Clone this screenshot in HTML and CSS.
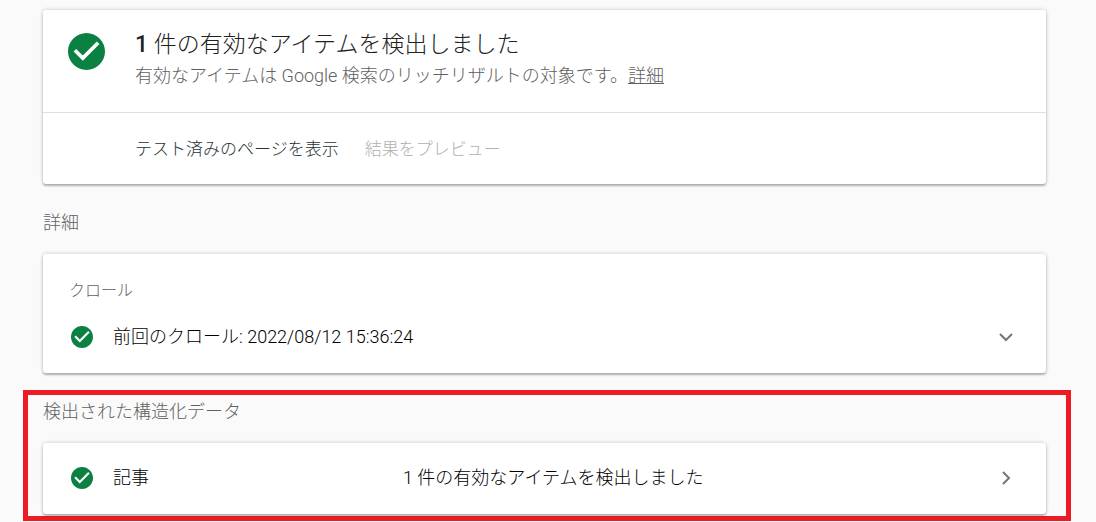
FILE: index.html
```html
<!DOCTYPE html>
<html lang="ja">
<head>
    <meta charset="UTF-8">
    <meta name="viewport" content="width=device-width, initial-scale=1.0">
    <title>リッチリザルト テスト</title>
    <link rel="stylesheet" href="styles.css">
</head>
<body>
<svg class="sprite" aria-hidden="true">
    <symbol id="icon-check" viewBox="2 2 20 20">
        <path d="M12 2C6.48 2 2 6.48 2 12s4.48 10 10 10 10-4.48 10-10S17.52 2 12 2zm-2 15l-5-5 1.41-1.41L10 14.17l7.59-7.59L19 8l-9 9z"/>
    </symbol>
</svg>

<main class="container">
    <section class="card summary">
        <div class="summary-top">
            <svg class="check check-large" aria-hidden="true"><use href="#icon-check"/></svg>
            <div>
                <h1><strong>1</strong> 件の有効なアイテムを検出しました</h1>
                <p>有効なアイテムは Google 検索のリッチリザルトの対象です。<a href="#details">詳細</a></p>
            </div>
        </div>
        <div class="summary-actions">
            <button type="button" class="btn">テスト済みのページを表示</button>
            <button type="button" class="btn" disabled>結果をプレビュー</button>
        </div>
    </section>

    <section class="group" id="details">
        <h2>詳細</h2>
        <div class="card crawl">
            <h3>クロール</h3>
            <button type="button" class="row" aria-expanded="false">
                <svg class="check" aria-hidden="true"><use href="#icon-check"/></svg>
                <span class="row-label">前回のクロール: 2022/08/12 15:36:24</span>
                <svg class="chevron" viewBox="0 0 24 24" aria-hidden="true"><path d="M6 9l6 6 6-6"/></svg>
            </button>
        </div>
    </section>

    <section class="group highlight">
        <h2>検出された構造化データ</h2>
        <div class="card items">
            <button type="button" class="row">
                <svg class="check" aria-hidden="true"><use href="#icon-check"/></svg>
                <span class="row-name">記事</span>
                <span class="row-label">1 件の有効なアイテムを検出しました</span>
                <svg class="chevron" viewBox="0 0 24 24" aria-hidden="true"><path d="M9 6l6 6-6 6"/></svg>
            </button>
        </div>
    </section>
</main>
</body>
</html>
```

FILE: styles.css
```css
* {
    box-sizing: border-box;
}

body {
    margin: 0;
    background: #fafafa;
    color: #212121;
    font-family: Roboto, "Noto Sans CJK JP Light", "Noto Sans CJK JP", sans-serif;
    font-size: 18px;
    font-weight: 300;
    line-height: 24px;
}

h1,
h2,
h3,
p {
    margin: 0;
    font-weight: 300;
}

.sprite {
    display: none;
}

.container {
    padding: 10px 50px 0 43px;
}

.card {
    background: #fff;
    border-radius: 3px;
    box-shadow: 0 2px 2px rgba(0, 0, 0, 0.24), 0 0 4px rgba(0, 0, 0, 0.2);
}

.check {
    flex: none;
    width: 22px;
    height: 22px;
    fill: #0b8043;
}

.check-large {
    width: 37px;
    height: 37px;
}

/* Summary */
.summary-top {
    display: flex;
    align-items: flex-start;
    gap: 30px;
    padding: 23px 25px 22px;
    border-bottom: 1px solid #e0e0e0;
}

.summary h1 {
    font-size: 23px;
    line-height: 24px;
    margin-bottom: 7px;
}

.summary h1 strong {
    font-weight: 500;
}

.summary p {
    color: #616161;
    padding-bottom: 2px;
}

.summary a {
    color: inherit;
}

.summary-actions {
    display: flex;
    gap: 26px;
    padding: 24px 92px 23px;
}

.btn {
    padding: 0;
    border: none;
    background: none;
    color: #263238;
    font: inherit;
    font-size: 17px;
    cursor: pointer;
}

.btn:disabled {
    color: #b0b0b0;
    cursor: default;
}

/* Result groups */
.group h2 {
    color: #616161;
    font-size: 18px;
    margin-bottom: 19px;
}

#details {
    margin-top: 27px;
}

.crawl {
    padding: 25px 0 24px;
}

.crawl h3 {
    color: #616161;
    font-size: 16px;
    padding: 0 26px;
    margin-bottom: 22px;
}

.row {
    display: flex;
    align-items: center;
    width: 100%;
    padding: 0 28px;
    border: none;
    background: none;
    color: #000;
    font: inherit;
    text-align: left;
    cursor: pointer;
}

.row .check {
    margin-right: 20px;
}

.row-label {
    flex: 1;
}

.row-name {
    flex: 0 0 290px;
}

.chevron {
    flex: none;
    width: 24px;
    height: 24px;
    fill: none;
    stroke: #757575;
    stroke-width: 2;
}

.items {
    padding: 23px 0 24px;
}

.highlight {
    margin: 17px -25px 0 -20px;
    padding: 5px 20px 2px 15px;
    border: 5px solid #ed1c24;
}
```
